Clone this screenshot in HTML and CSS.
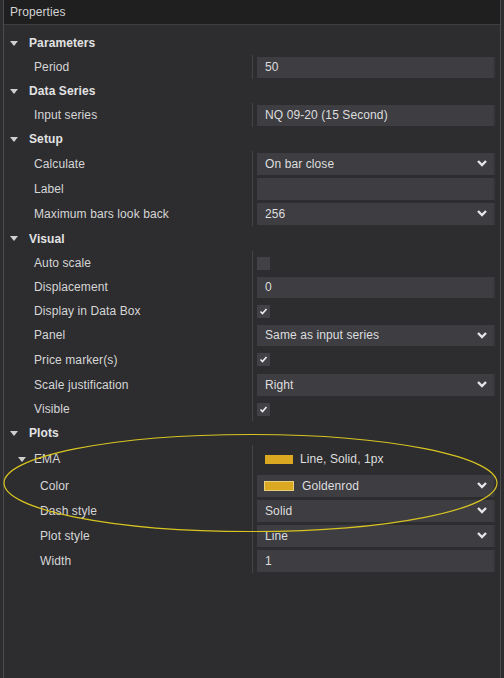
FILE: index.html
```html
<!DOCTYPE html>
<html>
<head>
<meta charset="utf-8">
<title>Properties</title>
<link rel="stylesheet" href="styles.css">
</head>
<body>
<div class="panel">
  <div class="titlebar">Properties</div>
  <div class="grid">
    <div class="row cat"><svg class="tri" viewBox="0 0 8 5"><polygon points="0,0 8,0 4,5"/></svg><span>Parameters</span></div>
    <div class="row prop"><div class="name">Period</div><div class="value"><div class="field">50</div></div></div>

    <div class="row cat"><svg class="tri" viewBox="0 0 8 5"><polygon points="0,0 8,0 4,5"/></svg><span>Data Series</span></div>
    <div class="row prop"><div class="name">Input series</div><div class="value"><div class="field">NQ 09-20 (15 Second)</div></div></div>

    <div class="row cat"><svg class="tri" viewBox="0 0 8 5"><polygon points="0,0 8,0 4,5"/></svg><span>Setup</span></div>
    <div class="row prop h25"><div class="name">Calculate</div><div class="value"><div class="field select"><span>On bar close</span><svg class="chev" viewBox="0 0 10 7"><polyline points="1,1 5,5 9,1"/></svg></div></div></div>
    <div class="row prop h25"><div class="name">Label</div><div class="value"><div class="field"></div></div></div>
    <div class="row prop h25"><div class="name">Maximum bars look back</div><div class="value"><div class="field select"><span>256</span><svg class="chev" viewBox="0 0 10 7"><polyline points="1,1 5,5 9,1"/></svg></div></div></div>

    <div class="row cat h25"><svg class="tri" viewBox="0 0 8 5"><polygon points="0,0 8,0 4,5"/></svg><span>Visual</span></div>
    <div class="row prop"><div class="name">Auto scale</div><div class="value"><div class="check"></div></div></div>
    <div class="row prop"><div class="name">Displacement</div><div class="value"><div class="field">0</div></div></div>
    <div class="row prop"><div class="name">Display in Data Box</div><div class="value"><div class="check"><svg viewBox="0 0 13 13"><polyline points="3.5,6.5 5.5,8.5 9.5,4"/></svg></div></div></div>
    <div class="row prop"><div class="name">Panel</div><div class="value"><div class="field select"><span>Same as input series</span><svg class="chev" viewBox="0 0 10 7"><polyline points="1,1 5,5 9,1"/></svg></div></div></div>
    <div class="row prop h25"><div class="name">Price marker(s)</div><div class="value"><div class="check"><svg viewBox="0 0 13 13"><polyline points="3.5,6.5 5.5,8.5 9.5,4"/></svg></div></div></div>
    <div class="row prop h25"><div class="name">Scale justification</div><div class="value"><div class="field select"><span>Right</span><svg class="chev" viewBox="0 0 10 7"><polyline points="1,1 5,5 9,1"/></svg></div></div></div>
    <div class="row prop"><div class="name">Visible</div><div class="value"><div class="check"><svg viewBox="0 0 13 13"><polyline points="3.5,6.5 5.5,8.5 9.5,4"/></svg></div></div></div>

    <div class="row cat"><svg class="tri" viewBox="0 0 8 5"><polygon points="0,0 8,0 4,5"/></svg><span>Plots</span></div>
    <div class="row prop h28"><div class="name sub"><svg class="tri" viewBox="0 0 8 5"><polygon points="0,0 8,0 4,5"/></svg><span>EMA</span></div><div class="value"><div class="summary"><span class="swatch"></span><span>Line, Solid, 1px</span></div></div></div>
    <div class="row prop h25"><div class="name child">Color</div><div class="value"><div class="field select colorfield"><span class="swatch big"></span><span class="cname">Goldenrod</span><svg class="chev" viewBox="0 0 10 7"><polyline points="1,1 5,5 9,1"/></svg></div></div></div>
    <div class="row prop h25"><div class="name child">Dash style</div><div class="value"><div class="field select"><span>Solid</span><svg class="chev" viewBox="0 0 10 7"><polyline points="1,1 5,5 9,1"/></svg></div></div></div>
    <div class="row prop h25"><div class="name child">Plot style</div><div class="value"><div class="field select"><span>Line</span><svg class="chev" viewBox="0 0 10 7"><polyline points="1,1 5,5 9,1"/></svg></div></div></div>
    <div class="row prop h25"><div class="name child">Width</div><div class="value"><div class="field">1</div></div></div>
  </div>
  <svg class="annotation" viewBox="0 0 504 678" width="504" height="678">
    <ellipse cx="250.5" cy="483" rx="246.5" ry="48.5"/>
  </svg>
</div>
</body>
</html>
```

FILE: styles.css
```css
html, body {
  margin: 0;
  padding: 0;
  background: #2d2d30;
}
body {
  width: 504px;
  height: 678px;
  overflow: hidden;
  font-family: "Liberation Sans", Arial, sans-serif;
  font-size: 12px;
  letter-spacing: 0.1px;
  color: #d6d6d6;
}
.panel {
  position: relative;
  height: 678px;
  margin: 0 3px;
  border-left: 1px solid #4a4a4c;
  border-right: 1px solid #4a4a4c;
  box-sizing: border-box;
}
.titlebar {
  height: 25px;
  line-height: 24px;
  padding-left: 6px;
  background: #1f1f20;
  border-bottom: 1px solid #3e3e40;
  color: #d2d2d2;
  font-size: 12px;
  box-sizing: border-box;
}
.grid {
  display: flex;
  flex-direction: column;
  padding-top: 6px;
}
.row {
  height: 24px;
  display: flex;
  align-items: center;
}
.row.h25 { height: 25px; }
.row.h28 { height: 28px; }
.cat {
  padding-left: 6px;
  gap: 11px;
  font-weight: bold;
  color: #e2e2e2;
}
.tri {
  width: 8px;
  height: 5px;
  fill: #cfcfcf;
  flex: none;
}
.prop .name {
  width: 248px;
  padding-left: 30px;
  box-sizing: border-box;
  white-space: nowrap;
  display: flex;
  align-items: center;
}
.prop .name.sub {
  padding-left: 14px;
  gap: 8px;
}
.prop .name.child {
  padding-left: 36px;
}
.value {
  flex: 1;
  align-self: stretch;
  display: flex;
  align-items: center;
  border-left: 1px solid #444447;
  padding: 0 5px 0 4px;
}
.field {
  flex: 1;
  height: 21px;
  background: #3d3d42;
  display: flex;
  align-items: center;
  padding: 0 8px;
  color: #dedede;
  box-sizing: border-box;
  border-right: 2px solid #38383c;
}
.h25 .field { height: 22px; }
.field.select {
  justify-content: space-between;
}
.chev {
  width: 10px;
  height: 7px;
  fill: none;
  stroke: #e6e6e6;
  stroke-width: 2.4;
  margin-right: -2px;
  flex: none;
}
.colorfield {
  justify-content: flex-start;
  padding-left: 7px;
}
.colorfield .cname {
  margin-left: 8px;
  flex: 1;
}
.summary {
  display: flex;
  align-items: center;
  gap: 7px;
  padding-left: 8px;
  color: #dedede;
}
.swatch {
  width: 28px;
  height: 9px;
  background: #dba822;
  flex: none;
}
.swatch.big {
  width: 28px;
  height: 8px;
  border: 1px solid #e9cf7c;
}
.check {
  width: 13px;
  height: 13px;
  background: #414146;
  display: flex;
}
.check svg {
  width: 13px;
  height: 13px;
  fill: none;
  stroke: #f0f0f0;
  stroke-width: 1.6;
}
.annotation {
  position: absolute;
  left: -4px;
  top: 0;
  pointer-events: none;
}
.annotation ellipse {
  fill: none;
  stroke: #d8c421;
  stroke-width: 1.2;
}
```
